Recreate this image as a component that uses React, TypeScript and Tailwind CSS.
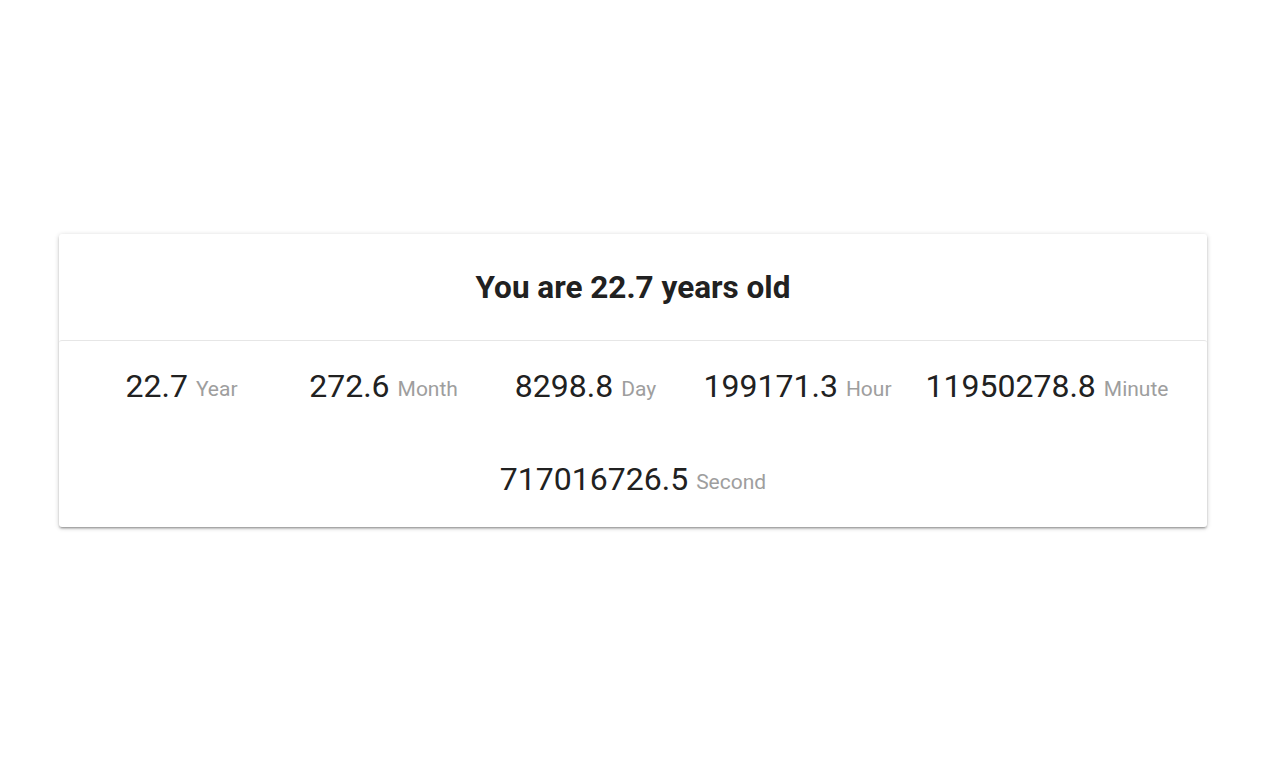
const stats = [
  { value: "22.7", unit: "Year" },
  { value: "272.6", unit: "Month" },
  { value: "8298.8", unit: "Day" },
  { value: "199171.3", unit: "Hour" },
  { value: "11950278.8", unit: "Minute" },
  { value: "717016726.5", unit: "Second" },
];

export default function App() {
  return (
    <div className="min-h-screen bg-white flex items-center justify-center pr-[4px] font-['Roboto',sans-serif]">
      <div className="w-[1148px] bg-white rounded-[3px] shadow-[0_2px_2px_0_rgba(0,0,0,0.14),0_3px_1px_-2px_rgba(0,0,0,0.12),0_1px_5px_0_rgba(0,0,0,0.2)]">
        <div className="h-[106px] pt-[3px] flex items-center justify-center">
          <h1 className="text-[31.5px] font-bold text-[#212121] leading-none">You are 22.7 years old</h1>
        </div>
        <div className="rounded-[3px] border-t border-[#e6e6e6] shadow-[0_1px_2px_0_rgba(0,0,0,0.06)] px-[14px] flex flex-wrap justify-center">
          {stats.map((s) => (
            <div key={s.unit} className="min-w-[202px] px-[17px] h-[93px] pb-[3px] flex items-center justify-center whitespace-nowrap">
              <span className="text-[32px] text-[#212121] leading-none">{s.value}</span>
              <span className="ml-[8px] text-[21px] text-[#9e9e9e] leading-none mt-[8px]">{s.unit}</span>
            </div>
          ))}
        </div>
      </div>
    </div>
  );
}
